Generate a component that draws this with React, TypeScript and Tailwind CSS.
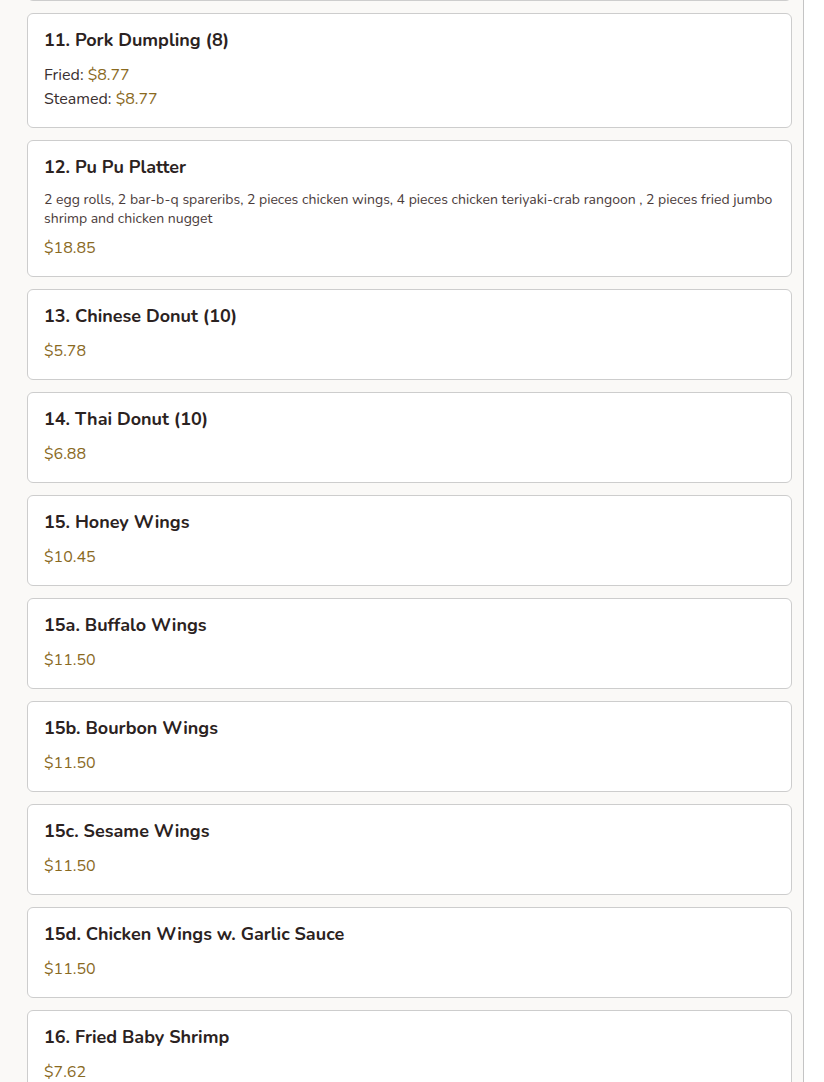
type Item = {
  name: string
  desc?: string
  price?: string
  options?: { label: string; price: string }[]
}

const items: Item[] = [
  { name: "10. Crab Rangoon (8)", price: "$7.50" },
  {
    name: "11. Pork Dumpling (8)",
    options: [
      { label: "Fried", price: "$8.77" },
      { label: "Steamed", price: "$8.77" },
    ],
  },
  {
    name: "12. Pu Pu Platter",
    desc: "2 egg rolls, 2 bar-b-q spareribs, 2 pieces chicken wings, 4 pieces chicken teriyaki-crab rangoon , 2 pieces fried jumbo shrimp and chicken nugget",
    price: "$18.85",
  },
  { name: "13. Chinese Donut (10)", price: "$5.78" },
  { name: "14. Thai Donut (10)", price: "$6.88" },
  { name: "15. Honey Wings", price: "$10.45" },
  { name: "15a. Buffalo Wings", price: "$11.50" },
  { name: "15b. Bourbon Wings", price: "$11.50" },
  { name: "15c. Sesame Wings", price: "$11.50" },
  { name: "15d. Chicken Wings w. Garlic Sauce", price: "$11.50" },
  { name: "16. Fried Baby Shrimp", price: "$7.62" },
  { name: "17. Fried Scallops", price: "$8.40" },
]

function MenuCard({ item }: { item: Item }) {
  return (
    <div className="bg-white border border-[#cdcdcd] rounded-md px-4 pt-[14px] pb-4">
      <h3 className="text-[18px] leading-6 font-bold text-[#2b2221]">{item.name}</h3>
      {item.desc && (
        <p className="mt-[11px] text-[14px] leading-[19px] text-[#4a3b3b]">{item.desc}</p>
      )}
      {item.price && (
        <p className={`${item.desc ? "mt-2" : "mt-[11px]"} text-[16px] leading-6 text-[#8a6a1f]`}>
          {item.price}
        </p>
      )}
      {item.options && (
        <div className="mt-[11px]">
          {item.options.map((o) => (
            <p key={o.label} className="text-[16px] leading-6 text-[#3a3030]">
              {o.label}: <span className="text-[#8a6a1f]">{o.price}</span>
            </p>
          ))}
        </div>
      )}
    </div>
  )
}

export default function App() {
  return (
    <div className="h-[1082px] overflow-hidden bg-white font-['Nunito','Lato',sans-serif]">
      <div className="w-[804px] h-full flex flex-col bg-[#faf9f7] border-r border-[#c4c4c4] pl-[27px] pr-[11px]">
        <div className="-mt-[90px] flex flex-col gap-3">
          {items.map((it) => (
            <MenuCard key={it.name} item={it} />
          ))}
        </div>
      </div>
    </div>
  )
}
